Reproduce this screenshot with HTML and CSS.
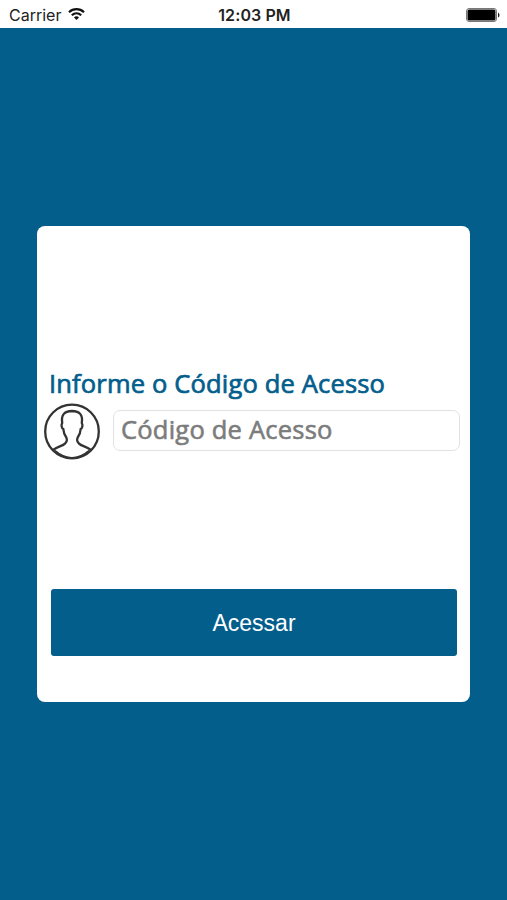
FILE: index.html
```html
<!DOCTYPE html>
<html lang="pt-BR">
<head>
<meta charset="utf-8">
<meta name="viewport" content="width=device-width">
<title>Acesso</title>
<link rel="stylesheet" href="styles.css">
</head>
<body>
<header class="status">
  <div class="carrier"><span>Carrier</span>
    <svg class="wifi" width="17" height="12" viewBox="0 0 17 12" fill="none" stroke="#111" stroke-width="2.200">
      <path d="M1 4.200C5.200.2 11.800.2 16 4.200M3.800 7.200C6.500 4.700 10.500 4.700 13.200 7.200"/>
      <path d="M8.500 11.900 6 9.400C7.300 8 9.700 8 11 9.400Z" fill="#111" stroke="none"/>
    </svg>
  </div>
  <time class="clock">12:03 PM</time>
  <svg class="battery" width="34" height="14" viewBox="0 0 34 14">
    <rect x=".5" y=".5" width="30" height="13" rx="2.500" fill="#fff" stroke="#777"/>
    <rect x="1.500" y="1.500" width="28" height="11" rx="1.500" fill="#000"/>
    <path d="M32 4.500Q33.500 5 33.500 7T32 9.500Z" fill="#222"/>
  </svg>
</header>
<main class="screen">
  <form class="card">
    <label class="title" for="code">Informe o Código de Acesso</label>
    <div class="field">
      <svg class="avatar" width="58" height="58" viewBox="0 0 58 58" fill="none" stroke="#333" stroke-width="2.300">
        <circle cx="29" cy="28.500" r="26.800"/>
        <path d="M10 47C14 44 19 43 21.500 41C24 39 24.300 36.500 23.300 34.500C21.500 32 20.500 29 20.300 26C18.500 25 18 22 19.200 20C18 12 21 8.300 29 8C37 8.300 40 12 38.800 20C40 22 39.500 25 37.700 26C37.500 29 36.500 32 34.700 34.500C33.700 36.500 34 39 36.500 41C39 43 44 44 48 47"/>
        <path d="M12 47.500Q29 62 46 47.500" stroke-width="1.600"/>
      </svg>
      <input class="code" id="code" type="text" placeholder="Código de Acesso">
    </div>
    <button class="submit" type="button">Acessar</button>
  </form>
</main>
</body>
</html>
```
FILE: styles.css
```css
* { box-sizing: border-box; }
body {
  margin: 0;
  height: 900px;
  overflow: hidden;
  background: #035e8c;
  font-family: "Open Sans", sans-serif;
}
.status {
  display: grid;
  grid-template-columns: 1fr auto 1fr;
  align-items: center;
  height: 28px;
  padding: 2px 7px 0 9px;
  background: #fff;
  color: #222;
  font: 16px/20px Inter, sans-serif;
}
.carrier { display: flex; align-items: center; gap: 7px; }
.wifi { margin-top: -3px; }
.clock { font-weight: 600; letter-spacing: .1px; }
.battery { justify-self: end; }
.screen { padding: 198px 37px 0; }
.card {
  display: flex;
  flex-direction: column;
  height: 476px;
  padding: 140px 10px 0 6px;
  border-radius: 8px;
  background: #fff;
}
.title {
  height: 36px;
  padding-left: 6px;
  color: #035e8c;
  font-size: 25.500px;
  font-weight: 400;
  letter-spacing: .17px;
  line-height: 34px;
  white-space: nowrap;
  -webkit-text-stroke: .7px #035e8c;
}
.field { display: flex; align-items: flex-start; gap: 12px; padding-top: 1px; }
.avatar { flex: none; }
.code {
  flex: 1;
  min-width: 0;
  height: 41px;
  margin-top: 7px;
  padding: 0 7px 4px;
  border: 1px solid #e2e2e2;
  border-radius: 7px;
  background: #fff;
  color: #7c7c7c;
  font: 400 25.500px "Open Sans", sans-serif;
  letter-spacing: .22px;
  outline: none;
  -webkit-text-stroke: .6px #7c7c7c;
}
.code::placeholder { color: #7c7c7c; opacity: 1; }
.submit {
  height: 67px;
  margin: 128px 3px 0 8px;
  padding-top: 3px;
  border: 0;
  border-radius: 3px;
  background: #035e8c;
  color: #fff;
  font: 23px "Liberation Sans", sans-serif;
}
```
